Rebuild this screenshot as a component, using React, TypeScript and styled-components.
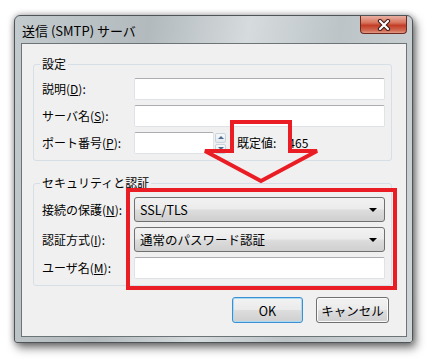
import { Fragment } from "react";
import styled, { createGlobalStyle } from "styled-components";

const GlobalStyle = createGlobalStyle`
  html, body {
    margin: 0;
    padding: 0;
    background: #ffffff;
  }
  body {
    font-family: "Noto Sans CJK JP", "Noto Sans", sans-serif;
    font-size: 12px;
    color: #000;
  }
`;

const Page = styled.div`
  width: 432px;
  height: 364px;
  box-sizing: border-box;
  padding: 15px 0 0 14px;
`;

const Window = styled.div`
  position: relative;
  width: 399px;
  height: 328px;
  box-sizing: border-box;
  border: 1px solid #4e5558;
  border-radius: 6px 6px 3px 3px;
  background: linear-gradient(100deg, #c4cbce 0%, #b2babd 30%, #d6dbdd 52%, #bcc4c7 72%, #d0d5d7 100%);
  box-shadow: 0 0 6px rgba(0, 0, 0, 0.35), 3px 5px 10px rgba(0, 0, 0, 0.5);
  display: flex;
  flex-direction: column;
`;

const TitleBar = styled.div`
  height: 27px;
  display: flex;
  align-items: flex-start;
  padding-left: 7px;
`;

const Title = styled.div`
  font-size: 13px;
  line-height: 16px;
  margin-top: 7px;
  color: #000;
`;

const CloseButton = styled.div`
  margin-left: auto;
  margin-right: 5px;
  width: 47px;
  height: 18px;
  box-sizing: border-box;
  border: 1px solid #6e2a20;
  border-top: none;
  border-radius: 0 0 4px 4px;
  background: linear-gradient(180deg, #e9b0a2 0%, #d8735c 40%, #c23d26 55%, #d06a52 85%, #e39a86 100%);
  display: flex;
  align-items: center;
  justify-content: center;
`;

const Client = styled.div`
  flex: 1;
  margin: 0 5px 5px 6px;
  border: 1px solid #6c7478;
  background: #f0f0f0;
  padding: 20px 14px 12px 11px;
  display: flex;
  flex-direction: column;
`;

const Group = styled.div<{ $gap: number }>`
  position: relative;
  border: 1px solid #d5dfe5;
  border-radius: 3px;
  padding: 13px 6px 6px 8px;
  display: grid;
  grid-template-columns: 92px 1fr;
  row-gap: 5px;
  align-items: center;
  margin-bottom: ${(p) => p.$gap}px;
`;

const Legend = styled.span`
  position: absolute;
  top: -9px;
  left: 6px;
  padding: 0 2px;
  background: #f0f0f0;
  line-height: 16px;
`;

const Label = styled.label`
  line-height: 16px;
  white-space: nowrap;
  u {
    text-decoration: underline;
  }
`;

const TextBox = styled.div<{ $width?: number }>`
  height: 22px;
  box-sizing: border-box;
  width: ${(p) => (p.$width ? `${p.$width}px` : "100%")};
  background: #fff;
  border: 1px solid #dfe3e8;
  border-top-color: #abadb3;
  border-radius: 2px;
`;

const PortRow = styled.div`
  display: flex;
  align-items: center;
`;

const Spin = styled.div`
  width: 11px;
  height: 21px;
  margin-left: 1px;
  display: flex;
  flex-direction: column;
  gap: 1px;
`;

const SpinPart = styled.div<{ $down?: boolean }>`
  flex: 1;
  border: 1px solid #c9d3dc;
  border-radius: 2px;
  background: linear-gradient(180deg, #f7f9fb, #e3e9ef);
  display: flex;
  align-items: center;
  justify-content: center;
  &::after {
    content: "";
    border-left: 3px solid transparent;
    border-right: 3px solid transparent;
    ${(p) =>
      p.$down ? "border-top: 3px solid #4e6c8e;" : "border-bottom: 3px solid #4e6c8e;"}
  }
`;

const DefaultLabel = styled.span`
  margin-left: 11px;
  line-height: 16px;
`;

const DefaultValue = styled.span`
  margin-left: 12px;
  line-height: 16px;
`;

const Combo = styled.div`
  height: 25px;
  box-sizing: border-box;
  border: 1px solid #707070;
  border-radius: 3px;
  background: linear-gradient(180deg, #f2f2f2 0%, #ebebeb 48%, #dddddd 52%, #cfcfcf 100%);
  display: flex;
  align-items: center;
  padding: 0 7px 0 5px;
  font-size: 12.5px;
  &::after {
    content: "";
    margin-left: auto;
    border-left: 4px solid transparent;
    border-right: 4px solid transparent;
    border-top: 4px solid #000;
  }
`;

const ButtonRow = styled.div`
  display: flex;
  justify-content: flex-end;
  gap: 13px;
  margin-right: 3px;
`;

const Button = styled.div<{ $primary?: boolean; $width: number }>`
  width: ${(p) => p.$width}px;
  height: 26px;
  box-sizing: border-box;
  border: 1px solid ${(p) => (p.$primary ? "#3c8fd0" : "#707070")};
  box-shadow: ${(p) => (p.$primary ? "inset 0 0 0 1px #a8daf4" : "inset 0 0 0 1px #fbfbfb")};
  border-radius: 3px;
  background: linear-gradient(180deg, #f2f2f2 0%, #ebebeb 48%, #dddddd 52%, #cfcfcf 100%);
  display: flex;
  align-items: center;
  justify-content: center;
  font-size: 12.5px;
`;

const RedBox = styled.div`
  position: absolute;
  left: 111px;
  top: 172px;
  width: 271px;
  height: 102px;
  box-sizing: border-box;
  border: 4px solid #ea1d25;
  pointer-events: none;
`;

const Arrow = styled.svg`
  position: absolute;
  left: 186px;
  top: 102px;
  pointer-events: none;
`;

const fields = [
  { text: "説明", key: "D" },
  { text: "サーバ名", key: "S" },
];

export default function App() {
  return (
    <>
      <GlobalStyle />
      <Page>
        <Window>
          <TitleBar>
            <Title>送信 (SMTP) サーバ</Title>
            <CloseButton>
              <svg width="14" height="12" viewBox="0 0 14 12">
                <path d="M3 2 L11 10 M11 2 L3 10" stroke="#3b1a15" strokeWidth="4.2" strokeLinecap="round" />
                <path d="M3 2 L11 10 M11 2 L3 10" stroke="#ffffff" strokeWidth="2.2" strokeLinecap="round" />
              </svg>
            </CloseButton>
          </TitleBar>
          <Client>
            <Group $gap={22}>
              <Legend>設定</Legend>
              {fields.map((f) => (
                <Fragment key={f.key}>
                  <Label>
                    {f.text}(<u>{f.key}</u>):
                  </Label>
                  <TextBox />
                </Fragment>
              ))}
              <Label>
                ポート番号(<u>P</u>):
              </Label>
              <PortRow>
                <TextBox $width={80} />
                <Spin>
                  <SpinPart />
                  <SpinPart $down />
                </Spin>
                <DefaultLabel>既定値:</DefaultLabel>
                <DefaultValue>465</DefaultValue>
              </PortRow>
            </Group>
            <Group $gap={11}>
              <Legend>セキュリティと認証</Legend>
              <Label>
                接続の保護(<u>N</u>):
              </Label>
              <Combo>SSL/TLS</Combo>
              <Label>
                認証方式(<u>I</u>):
              </Label>
              <Combo>通常のパスワード認証</Combo>
              <Label>
                ユーザ名(<u>M</u>):
              </Label>
              <TextBox />
            </Group>
            <ButtonRow>
              <Button $primary $width={71}>OK</Button>
              <Button $width={73}>キャンセル</Button>
            </ButtonRow>
          </Client>
          <RedBox />
          <Arrow width="122" height="68" viewBox="0 0 122 68">
            <polygon
              points="31,4 89,4 89,33 116,33 60,63 4,33 31,33"
              fill="none"
              stroke="#ea1d25"
              strokeWidth="4"
              strokeLinejoin="miter"
            />
          </Arrow>
        </Window>
      </Page>
    </>
  );
}
